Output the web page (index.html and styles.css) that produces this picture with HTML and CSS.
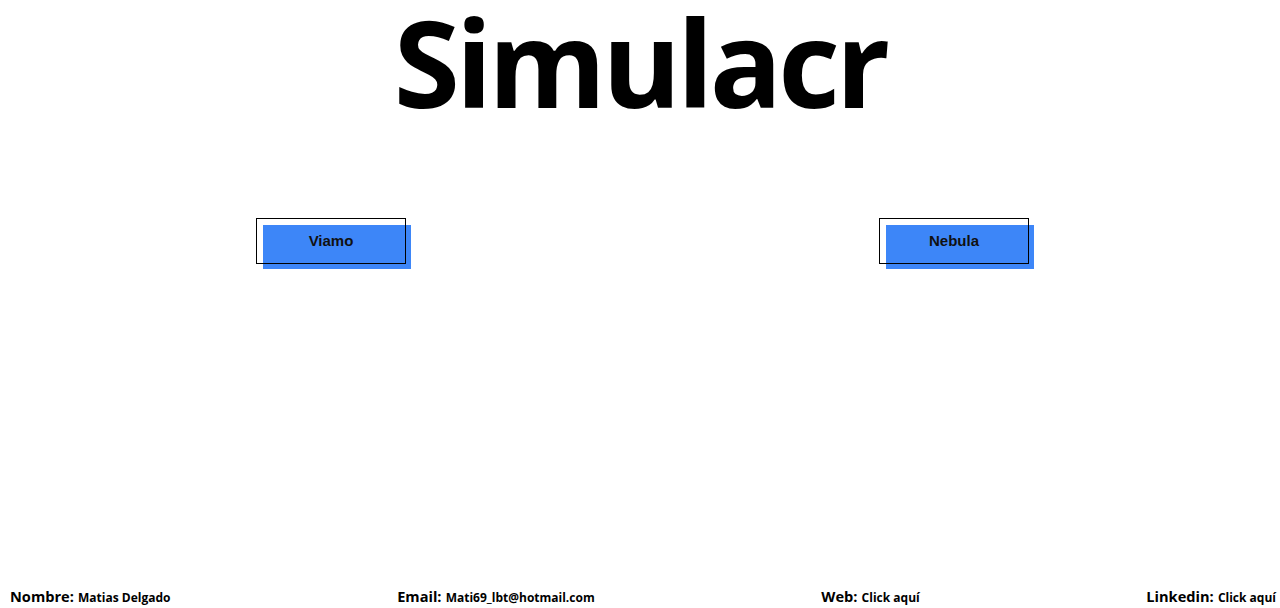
FILE: index.html
```html
<!DOCTYPE html>
<html lang="es">
<head>
<meta charset="utf-8">
<title>Simulacr</title>
<link rel="stylesheet" href="styles.css">
</head>
<body>
<div class="page">
  <header class="header">
    <h1 class="title">Simulacr</h1>
  </header>
  <main class="options">
    <a class="option" href="#">
      <span class="option-fill"></span>
      <span class="option-frame"></span>
      <span class="option-label">Viamo</span>
    </a>
    <a class="option" href="#">
      <span class="option-fill"></span>
      <span class="option-frame"></span>
      <span class="option-label">Nebula</span>
    </a>
  </main>
  <footer class="footer">
    <div class="info"><span class="info-label">Nombre:</span> <span class="info-value">Matias Delgado</span></div>
    <div class="info"><span class="info-label">Email:</span> <span class="info-value">Mati69_lbt@hotmail.com</span></div>
    <div class="info"><span class="info-label">Web:</span> <span class="info-value">Click aquí</span></div>
    <div class="info"><span class="info-label">Linkedin:</span> <span class="info-value">Click aquí</span></div>
  </footer>
</div>
</body>
</html>
```
FILE: styles.css
```css
html, body {
  margin: 0;
  padding: 0;
  background: #ffffff;
}

.page {
  height: 608px;
  display: flex;
  flex-direction: column;
  font-family: "Open Sans", "Noto Sans", sans-serif;
  color: #000;
}

.header {
  display: flex;
  justify-content: center;
}

.title {
  margin: 0;
  padding-top: 2px;
  font-size: 120px;
  font-weight: 700;
  line-height: 120px;
  letter-spacing: -4px;
  height: 138px;
}

.options {
  display: flex;
  justify-content: space-between;
  padding: 78px 246px 0 256px;
}

.option {
  position: relative;
  display: block;
  width: 155px;
  height: 51px;
  text-decoration: none;
  color: #000;
}

.option-fill {
  position: absolute;
  left: 7px;
  top: 7px;
  width: 148px;
  height: 44px;
  background: #3d86f8;
}

.option-frame {
  position: absolute;
  left: 0;
  top: 0;
  width: 148px;
  height: 44px;
  border: 1px solid #000;
}

.option-label {
  position: absolute;
  left: 0;
  top: 0;
  width: 150px;
  height: 45px;
  display: flex;
  align-items: center;
  justify-content: center;
  font-family: "Liberation Sans", Arial, sans-serif;
  font-weight: 700;
  font-size: 15px;
  color: #111;
}

.footer {
  margin-top: auto;
  display: flex;
  justify-content: space-between;
  align-items: baseline;
  padding: 0 4px 1px 10px;
}

.info {
  font-weight: 700;
  white-space: nowrap;
}

.info-label {
  font-size: 14.6px;
}

.info-value {
  font-size: 12px;
}
```
